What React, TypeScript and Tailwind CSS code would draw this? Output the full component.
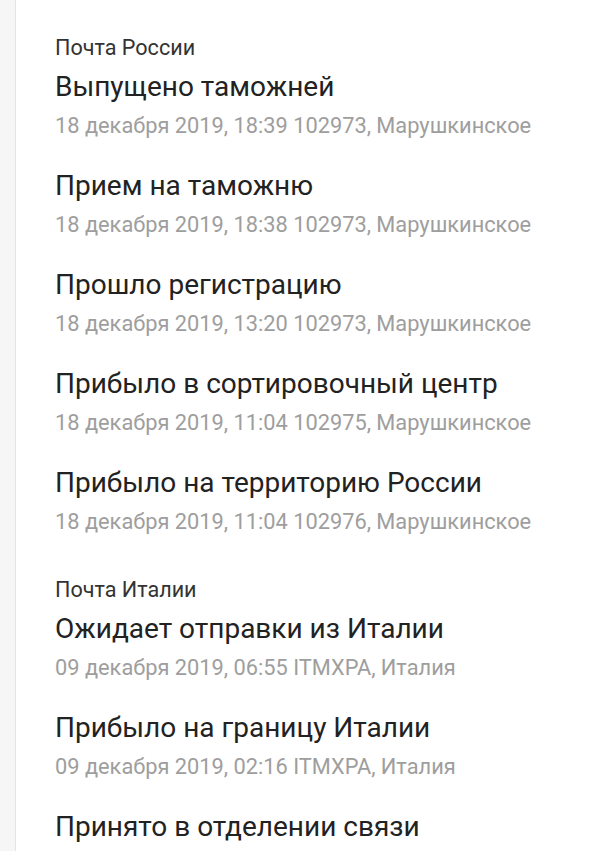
type TrackEvent = { title: string; info?: string };

const groups: { carrier: string; events: TrackEvent[] }[] = [
  {
    carrier: "Почта России",
    events: [
      { title: "Выпущено таможней", info: "18 декабря 2019, 18:39 102973, Марушкинское" },
      { title: "Прием на таможню", info: "18 декабря 2019, 18:38 102973, Марушкинское" },
      { title: "Прошло регистрацию", info: "18 декабря 2019, 13:20 102973, Марушкинское" },
      { title: "Прибыло в сортировочный центр", info: "18 декабря 2019, 11:04 102975, Марушкинское" },
      { title: "Прибыло на территорию России", info: "18 декабря 2019, 11:04 102976, Марушкинское" },
    ],
  },
  {
    carrier: "Почта Италии",
    events: [
      { title: "Ожидает отправки из Италии", info: "09 декабря 2019, 06:55 ITMXPA, Италия" },
      { title: "Прибыло на границу Италии", info: "09 декабря 2019, 02:16 ITMXPA, Италия" },
      { title: "Принято в отделении связи" },
    ],
  },
];

export default function App() {
  return (
    <div className="flex h-[851px] overflow-hidden bg-white font-['Roboto',sans-serif]">
      {/* left rail */}
      <div className="w-4 shrink-0 bg-[#f6f6f6] border-r border-[#e4e4e4]" />

      <main className="flex-1 pl-[39px] pt-[34px]">
        {groups.map((g, gi) => (
          <section key={g.carrier} className={gi > 0 ? "mt-[39px]" : ""}>
            <div className="text-[21.6px] leading-7 text-[#333]">{g.carrier}</div>
            <ul className="mt-[7px] flex flex-col gap-[27px]">
              {g.events.map((e) => (
                <li key={e.title}>
                  <div className="text-[28px] leading-9 text-[#222]">{e.title}</div>
                  {e.info && (
                    <div className="mt-[6px] text-[21.8px] leading-[30px] text-[#9e9e9e]">{e.info}</div>
                  )}
                </li>
              ))}
            </ul>
          </section>
        ))}
      </main>
    </div>
  );
}
